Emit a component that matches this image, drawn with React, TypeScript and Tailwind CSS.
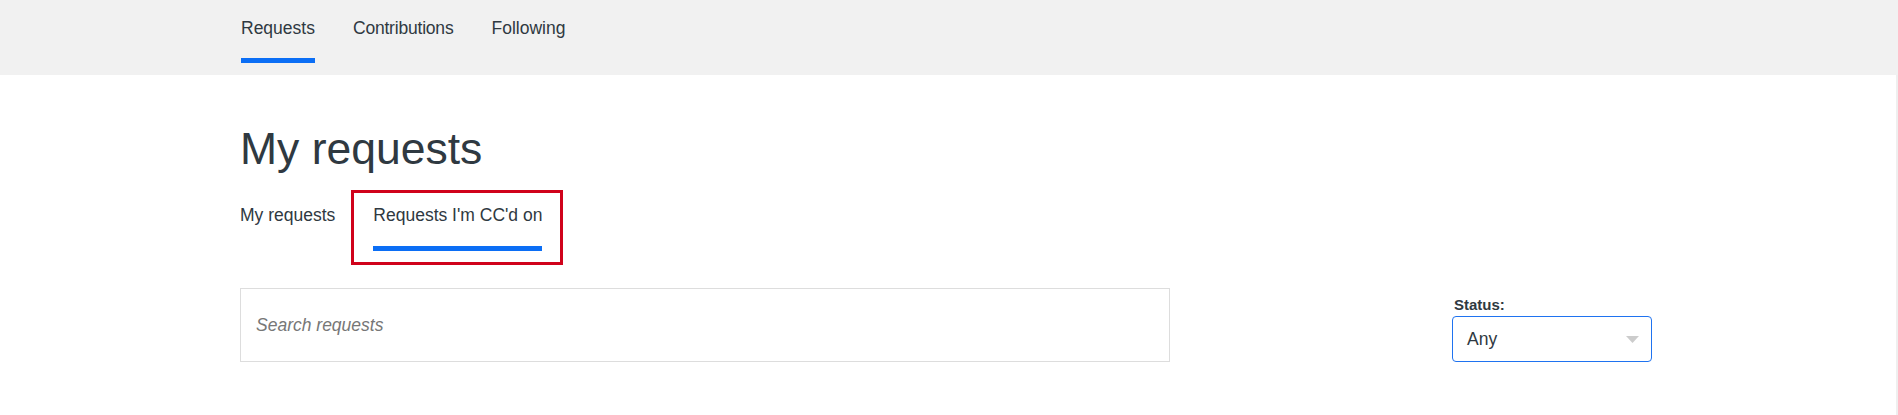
import React from "react";

const font = { fontFamily: '"Liberation Sans", Arial, sans-serif' };

export default function App() {
  return (
    <div className="w-[1898px] min-h-[415px] bg-white text-[#2f3941]" style={font}>
      <header className="h-[75px] bg-[#f1f1f1]">
        <nav className="w-[1416px] mx-auto flex gap-[38px] pt-[18px]">
          <div className="flex flex-col">
            <span className="text-[17.5px] leading-[20px] text-[#2f3941]">Requests</span>
            <span className="mt-[20px] h-[5px] bg-[#0b6ef5]" />
          </div>
          <span className="text-[17.5px] leading-[20px] text-[#2f3941] tracking-[-0.2px]">Contributions</span>
          <span className="text-[17.5px] leading-[20px] text-[#2f3941]">Following</span>
        </nav>
      </header>
      <main className="border-r-2 border-[#efefef] min-h-[340px]">
        <div className="w-[1416px] mx-auto pt-[48px]">
          <h1 className="text-[44.5px] leading-[52px] font-normal text-[#2f3941]">My requests</h1>
          <div className="relative mt-[30px] flex gap-[38px]">
            <span className="text-[17.5px] leading-[20px] text-[#2f3941]">My requests</span>
            <div className="flex flex-col">
              <span className="text-[17.5px] leading-[20px] text-[#2f3941]">Requests I'm CC'd on</span>
              <span className="mt-[21px] h-[5px] bg-[#0b6ef5]" />
            </div>
            <div className="absolute left-[111px] top-[-15px] w-[212px] h-[75px] border-[3.5px] border-[#d0021b]" />
          </div>
          <div className="mt-[37px] flex items-end">
            <div className="w-[930px] h-[74px] border border-[#dddddd] flex items-center pl-[15px]">
              <span className="text-[17.5px] italic text-[#777777]">Search requests</span>
            </div>
            <div className="ml-auto mr-[4px] w-[200px] flex flex-col">
              <label className="text-[15px] leading-[18px] font-bold text-[#2f3941] ml-[2px]">Status:</label>
              <div className="mt-[2px] h-[46px] border border-[#1f73f0] rounded-[4px] flex items-center justify-between pl-[14px] pr-[12px]">
                <span className="text-[17.5px] text-[#2f3941]">Any</span>
                <svg width="13" height="7" viewBox="0 0 13 7">
                  <path d="M0 0 L13 0 L6.5 7 Z" fill="#cccccc" />
                </svg>
              </div>
            </div>
          </div>
        </div>
      </main>
    </div>
  );
}
